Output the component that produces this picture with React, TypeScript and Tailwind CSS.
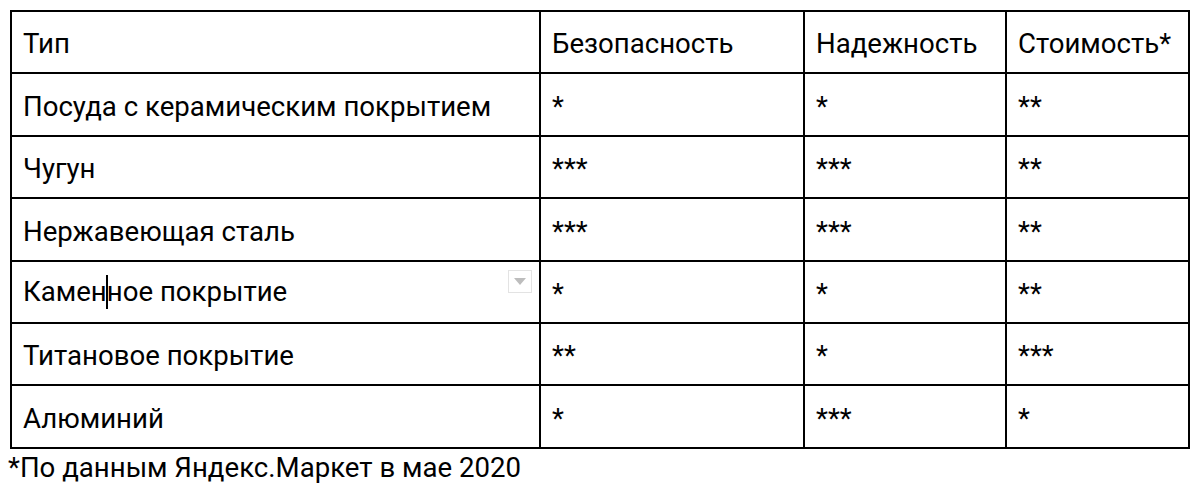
const rows = [
  ["Посуда с керамическим покрытием", "*", "*", "**"],
  ["Чугун", "***", "***", "**"],
  ["Нержавеющая сталь", "***", "***", "**"],
  ["Каменное покрытие", "*", "*", "**"],
  ["Титановое покрытие", "**", "*", "***"],
  ["Алюминий", "*", "***", "*"],
]

function Cell({ children, first }: { children: React.ReactNode; first?: boolean }) {
  return (
    <td className={`border-2 border-black h-[62.4px] pl-[11px] pt-[4px] align-middle ${first ? "relative" : ""}`}>
      {children}
    </td>
  )
}

export default function App() {
  return (
    <div className="w-[1200px] h-[487px] bg-white text-black pt-[10px] pl-[10px] font-['Roboto',sans-serif] text-[27.6px] leading-none">
      <table className="border-collapse table-fixed w-[1178px]">
        <colgroup>
          <col className="w-[529px]" />
          <col className="w-[264px]" />
          <col className="w-[202px]" />
          <col className="w-[183px]" />
        </colgroup>
        <thead>
          <tr>
            <Cell>Тип</Cell>
            <Cell>Безопасность</Cell>
            <Cell>Надежность</Cell>
            <Cell>Стоимость*</Cell>
          </tr>
        </thead>
        <tbody>
          {rows.map((r, i) => (
            <tr key={i}>
              <Cell first>
                {i === 3 ? (
                  <>
                    Камен
                    <span className="inline-block w-[2px] h-[34px] bg-black align-middle -mx-px -mt-1" />
                    ное покрытие
                    <span className="absolute right-[7px] top-[8px] w-[24px] h-[23px] border border-[#e3e3e3] flex items-center justify-center">
                      <svg width="12" height="7" viewBox="0 0 12 7">
                        <path d="M0 0h12L6 7z" fill="#bdbdbd" />
                      </svg>
                    </span>
                  </>
                ) : (
                  r[0]
                )}
              </Cell>
              <Cell>{r[1]}</Cell>
              <Cell>{r[2]}</Cell>
              <Cell>{r[3]}</Cell>
            </tr>
          ))}
        </tbody>
      </table>
      <p className="-ml-[2px] mt-[5px]">*По данным Яндекс.Маркет в мае 2020</p>
    </div>
  )
}
